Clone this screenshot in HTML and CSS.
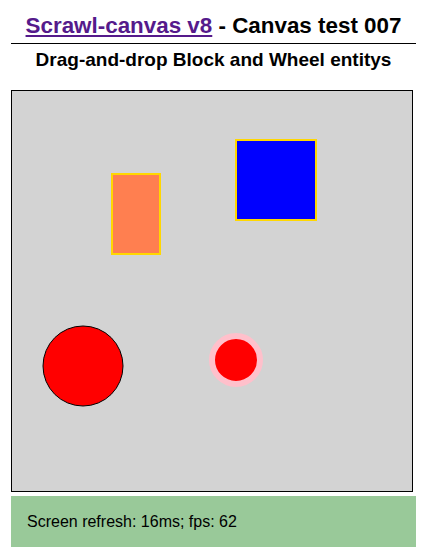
FILE: index.html
```html
<!DOCTYPE html>
<html lang="en">
<head>
<meta charset="utf-8">
<title>Scrawl-canvas v8 - Canvas test 007</title>
<link rel="stylesheet" href="styles.css">
</head>
<body>
<div class="page">
  <h1 class="title"><a class="home" href="#">Scrawl-canvas v8</a> - Canvas test 007</h1>
  <h2 class="subtitle">Drag-and-drop Block and Wheel entitys</h2>
  <div class="canvas-wrap">
    <svg class="canvas" width="400" height="400" viewBox="0 0 400 400">
      <rect x="0" y="0" width="400" height="400" fill="#d3d3d3"/>
      <rect x="100" y="83" width="48" height="80" fill="#ff7f50" stroke="#ffd700" stroke-width="2"/>
      <rect x="224" y="49" width="80" height="80" fill="#0000ff" stroke="#ffd700" stroke-width="2"/>
      <circle cx="71" cy="275" r="40" fill="#ff0000" stroke="#000" stroke-width="1"/>
      <circle cx="224" cy="269" r="24" fill="#ff0000" stroke="#ffc0cb" stroke-width="6"/>
    </svg>
  </div>
  <div class="report">Screen refresh: 16ms; fps: 62</div>
</div>
</body>
</html>
```
FILE: styles.css
```css
html, body {
  margin: 0;
  padding: 0;
  background: #fff;
}
body {
  font-family: "Liberation Sans", Arial, sans-serif;
  color: #000;
}
.page {
  margin-left: 11px;
  width: 405px;
  padding-top: 13px;
}
.title {
  margin: 0;
  font-size: 22.4px;
  line-height: 26px;
  font-weight: bold;
  text-align: center;
  padding-bottom: 4px;
  border-bottom: 1px solid #000;
}
.home {
  color: #551a8b;
  text-decoration: underline;
}
.subtitle {
  margin: 5px 0 0;
  font-size: 19px;
  line-height: 22px;
  font-weight: bold;
  text-align: center;
}
.canvas-wrap {
  margin-top: 19px;
  width: 400px;
  height: 400px;
  border: 1px solid #000;
}
.canvas {
  display: block;
}
.report {
  margin-top: 4px;
  background: #99c999;
  padding: 16px;
  font-size: 16px;
  line-height: 19px;
}
```
